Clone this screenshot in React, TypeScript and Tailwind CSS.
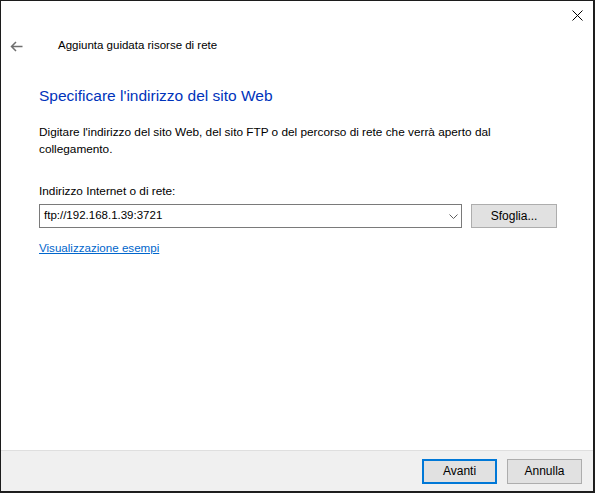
import React from 'react';

const font = { fontFamily: '"Segoe UI", "Liberation Sans", Arial, sans-serif' };

function CloseIcon() {
  return (
    <svg width="11" height="11" viewBox="0 0 11 11" fill="none">
      <path d="M0.5 0.5 L10.5 10.5 M10.5 0.5 L0.5 10.5" stroke="#000" strokeWidth="1" />
    </svg>
  );
}

function BackArrow() {
  return (
    <svg width="13" height="11" viewBox="0 0 13 11" fill="none">
      <path d="M12.5 5.5 H1.5 M6 1 L1.5 5.5 L6 10" stroke="#6f6f6f" strokeWidth="1.5" />
    </svg>
  );
}

function Chevron() {
  return (
    <svg width="9" height="5" viewBox="0 0 9 5" fill="none">
      <path d="M0.5 0.5 L4.5 4.5 L8.5 0.5" stroke="#606060" strokeWidth="1" />
    </svg>
  );
}

export default function App() {
  return (
    <div className="w-[595px] h-[493px] bg-[#1f1f1f] text-[12px] text-black" style={font}>
      <div className="flex flex-col w-[594px] h-[492px] border border-[#1c1c1c] bg-white">
        {/* caption bar */}
        <div className="flex justify-end h-[29px] pt-[9px] pr-[10px]">
          <CloseIcon />
        </div>

        {/* wizard header */}
        <div className="flex items-center h-[32px]">
          <div className="w-[57px] pl-[9px] flex items-center">
            <BackArrow />
          </div>
          <span className="text-[11.5px]">Aggiunta guidata risorse di rete</span>
        </div>

        {/* content */}
        <div className="flex-1 pl-[38px] pr-[36px]">
          <h1 className="mt-[23px] text-[15.5px] leading-[22px] text-[#0033bb]">
            Specificare l'indirizzo del sito Web
          </h1>

          <p className="mt-[17px] w-[462px] text-[11.8px] leading-[17px]">
            Digitare l'indirizzo del sito Web, del sito FTP o del percorso di rete che verrà aperto dal collegamento.
          </p>

          <div className="mt-[25px] text-[11.8px] leading-[17px]">Indirizzo Internet o di rete:</div>

          <div className="mt-[4px] flex items-center gap-[9px]">
            <div className="flex items-center w-[424px] h-[24px] border border-[#7a7a7a] pl-[4px] pr-[3px]">
              <span className="flex-1 text-[11.5px]">ftp://192.168.1.39:3721</span>
              <Chevron />
            </div>
            <button className="w-[86px] h-[24px] border border-[#adadad] bg-[#e1e1e1]">Sfoglia...</button>
          </div>

          <div className="mt-[11px]">
            <span className="text-[11.6px] text-[#0066cc] underline underline-offset-1">Visualizzazione esempi</span>
          </div>
        </div>

        {/* footer */}
        <div className="flex items-center justify-end gap-[10px] h-[41px] pr-[11px] border-t border-[#dfdfdf] bg-[#f0f0f0]">
          <button className="w-[75px] h-[25px] border-2 border-[#0078d7] bg-[#e1e1e1]">Avanti</button>
          <button className="w-[75px] h-[25px] border border-[#adadad] bg-[#e1e1e1]">Annulla</button>
        </div>
      </div>
    </div>
  );
}
